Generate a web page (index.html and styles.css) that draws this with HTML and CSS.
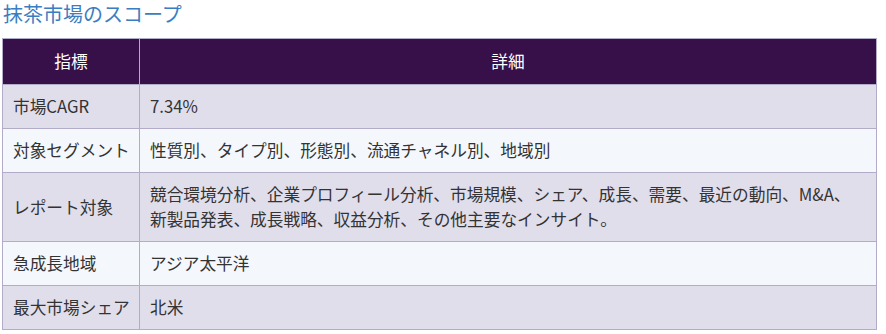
FILE: index.html
```html
<!DOCTYPE html>
<html lang="ja">
<head>
<meta charset="utf-8">
<link rel="stylesheet" href="styles.css">
</head>
<body>
<h2 class="title">抹茶市場のスコープ</h2>
<table class="scope">
  <colgroup><col class="col-key"><col class="col-val"></colgroup>
  <thead>
    <tr><th>指標</th><th>詳細</th></tr>
  </thead>
  <tbody>
    <tr><td>市場CAGR</td><td>7.34%</td></tr>
    <tr><td>対象セグメント</td><td>性質別、タイプ別、形態別、流通チャネル別、地域別</td></tr>
    <tr><td>レポート対象</td><td>競合環境分析、企業プロフィール分析、市場規模、シェア、成長、需要、最近の動向、M&amp;A、新製品発表、成長戦略、収益分析、その他主要なインサイト。</td></tr>
    <tr><td>急成長地域</td><td>アジア太平洋</td></tr>
    <tr><td>最大市場シェア</td><td>北米</td></tr>
  </tbody>
</table>
</body>
</html>
```
FILE: styles.css
```css
html, body {
  margin: 0;
  padding: 0;
  background: #ffffff;
}
body {
  padding: 0 2px;
  font-family: "Noto Sans CJK JP", "Noto Sans", sans-serif;
  color: #333333;
}
.title {
  margin: 0 0 0 1px;
  font-size: 20px;
  font-weight: 400;
  line-height: 28px;
  color: #3b7dc2;
  height: 38px;
}
.scope {
  width: 875px;
  table-layout: fixed;
  border-collapse: collapse;
  font-size: 16.7px;
  line-height: 25px;
}
.col-key {
  width: 137px;
}
.scope th, .scope td {
  border: 1px solid #b3acc9;
  padding: 9px 10px;
  text-align: left;
  vertical-align: middle;
}
.scope td:first-child {
  white-space: nowrap;
  padding-right: 0;
}
.scope th {
  background: #37104a;
  color: #ffffff;
  font-weight: 400;
  text-align: center;
  padding: 10px;
}
.scope tbody tr:nth-child(odd) td {
  background: #e1deec;
}
.scope tbody tr:nth-child(even) td {
  background: #f4f8fc;
}
```
